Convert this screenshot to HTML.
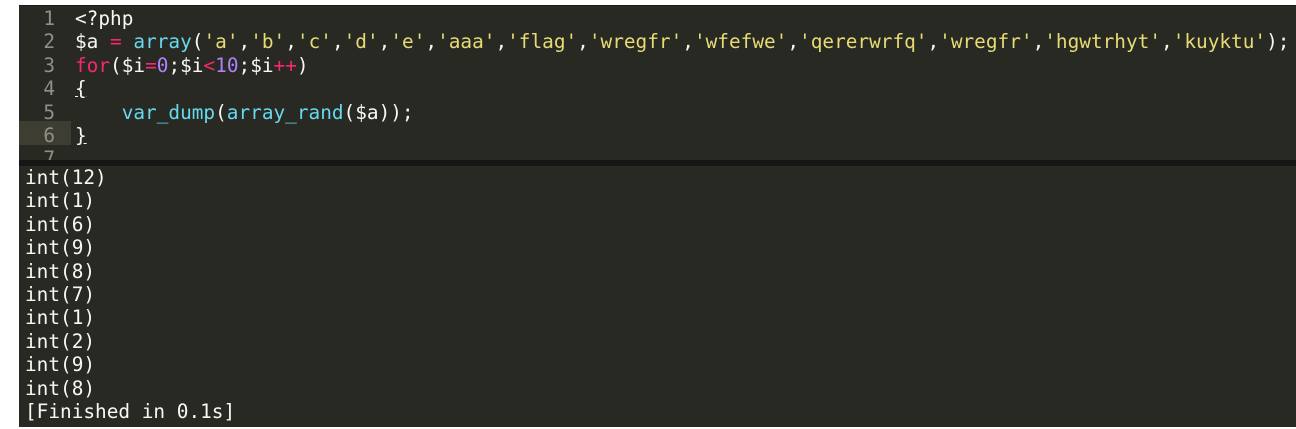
<!DOCTYPE html>
<html><head><style>
body{margin:0;background:#fff;width:1296px;height:429px;overflow:hidden;position:relative}
.p{position:absolute;left:19px;top:5px;right:0;bottom:2px;background:#282923;border-top:1px solid #1a1a17}
.ed{position:absolute;left:0;top:0;right:0;height:154px;overflow:hidden}
.ln{position:absolute;left:0;width:36px;text-align:right;color:#8f908a}
.c{position:absolute;left:56px;white-space:pre;color:#f8f8f2}
pre,div{font-family:"DejaVu Sans Mono","Liberation Mono",monospace;font-size:19.4px}
.hl{position:absolute;left:0;top:115px;width:52px;height:24px;background:#3e3d32}
.dv{position:absolute;left:0;right:0;top:154px;height:6px;background:#161614}
.out{position:absolute;left:6px;top:160px;margin:0;color:#f8f8f2;line-height:23.4px}
.k{color:#f92672}.f{color:#66d9ef}.s{color:#e6db74}.n{color:#ae81ff}
</style></head><body><div class="p">
<div class="ed">
<div class="hl"></div>
<div style="position:absolute;top:0;left:0;right:0;line-height:23.4px">
<div style="position:absolute;top:1px;left:0;right:0">
<div class="ln" style="top:0">1</div><div class="c" style="top:0">&lt;?php</div>
<div class="ln" style="top:23.4px">2</div><div class="c" style="top:23.4px">$a <span class="k">=</span> <span class="f">array</span>(<span class="s">'a'</span>,<span class="s">'b'</span>,<span class="s">'c'</span>,<span class="s">'d'</span>,<span class="s">'e'</span>,<span class="s">'aaa'</span>,<span class="s">'flag'</span>,<span class="s">'wregfr'</span>,<span class="s">'wfefwe'</span>,<span class="s">'qererwrfq'</span>,<span class="s">'wregfr'</span>,<span class="s">'hgwtrhyt'</span>,<span class="s">'kuyktu'</span>);</div>
<div class="ln" style="top:46.8px">3</div><div class="c" style="top:46.8px"><span class="k">for</span>($i<span class="k">=</span><span class="n">0</span>;$i<span class="k">&lt;</span><span class="n">10</span>;$i<span class="k">++</span>)</div>
<div class="ln" style="top:70.2px">4</div><div class="c" style="top:70.2px"><u>{</u></div>
<div class="ln" style="top:93.6px">5</div><div class="c" style="top:93.6px">    <span class="f">var_dump</span>(<span class="f">array_rand</span>($a));</div>
<div class="ln" style="top:117px">6</div><div class="c" style="top:117px"><u>}</u></div>
<div class="ln" style="top:140.4px">7</div>
</div></div></div>
<div class="dv"></div>
<pre class="out">int(12)
int(1)
int(6)
int(9)
int(8)
int(7)
int(1)
int(2)
int(9)
int(8)
[Finished in 0.1s]</pre>
</div></body></html>
